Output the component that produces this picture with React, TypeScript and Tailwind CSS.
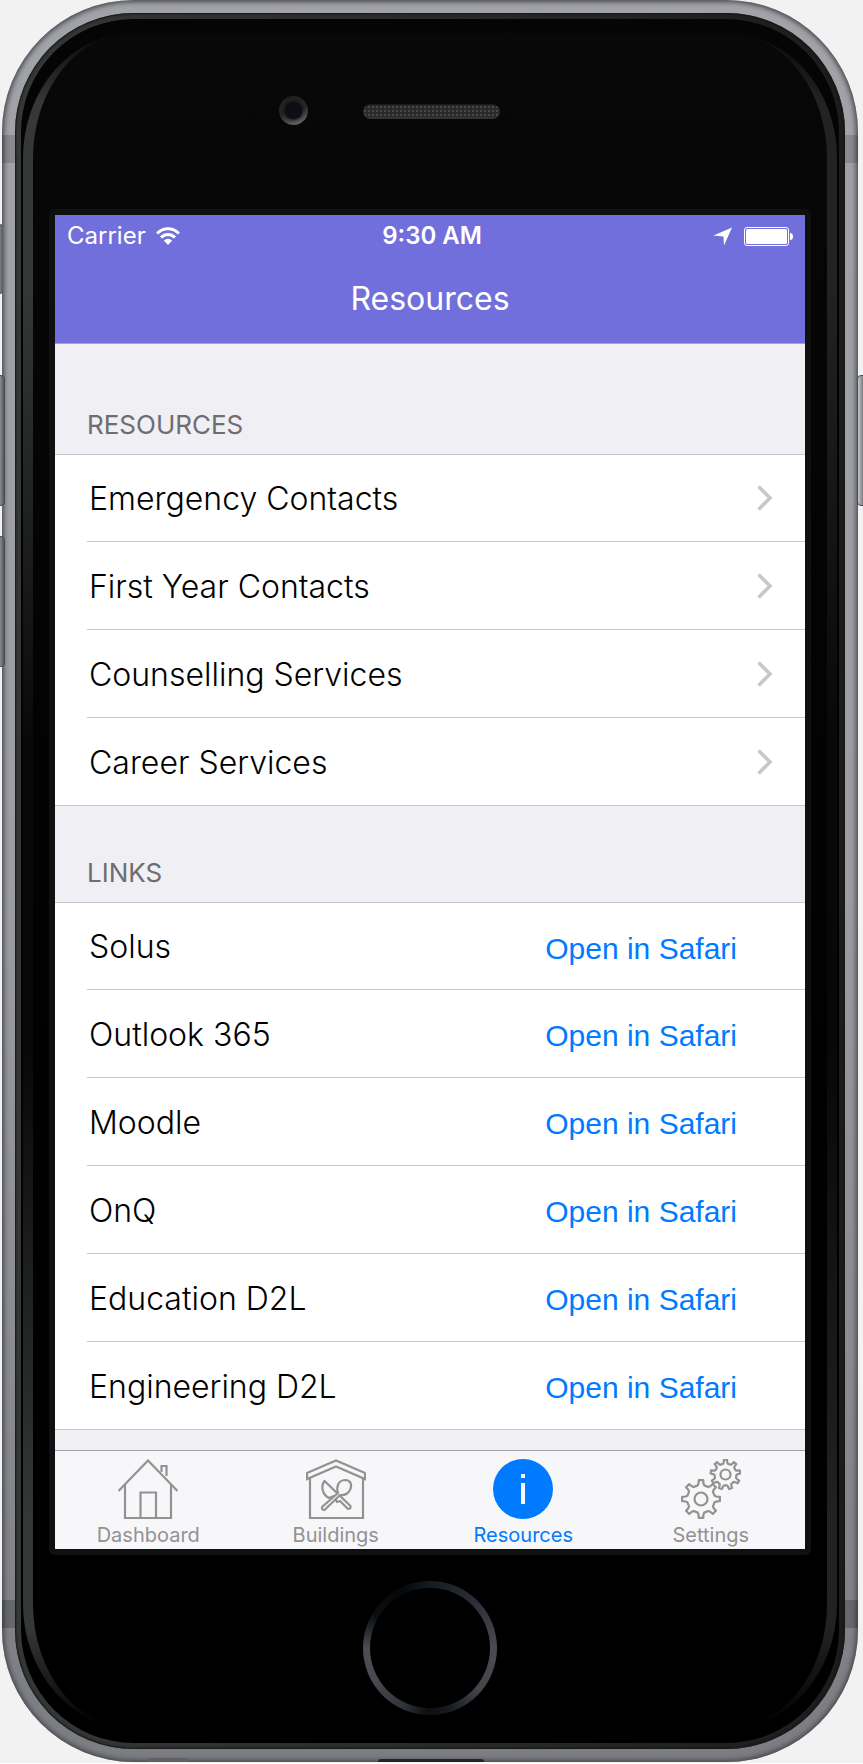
import React from "react";

const contacts = ["Emergency Contacts", "First Year Contacts", "Counselling Services", "Career Services"];
const links = ["Solus", "Outlook 365", "Moodle", "OnQ", "Education D2L", "Engineering D2L"];

function gearPath(cx: number, cy: number, outer: number, inner: number, teeth: number, offset: number) {
  const step = (Math.PI * 2) / teeth;
  const profile: [number, number][] = [
    [-0.3, inner],
    [-0.2, inner + (outer - inner) * 0.35],
    [-0.15, outer],
    [0.15, outer],
    [0.2, inner + (outer - inner) * 0.35],
    [0.3, inner],
  ];
  const points: string[] = [];
  for (let i = 0; i < teeth; i++) {
    for (const [t, r] of profile) {
      const a = offset + (i + t) * step;
      points.push(`${(cx + Math.cos(a) * r).toFixed(2)} ${(cy + Math.sin(a) * r).toFixed(2)}`);
    }
  }
  return `M${points.join("L")}Z`;
}

function DashboardIcon() {
  return (
    <svg width="60" height="60" viewBox="0 0 60 60" fill="none" stroke="#929292" strokeWidth="2.2" aria-hidden="true">
      <path d="M0.500 32 30 1.500 59.500 32" />
      <path d="M7 25V59H53V25" />
      <path d="M22.500 59V33.500H38V59" />
      <path d="M43.500 13V7H48.500V17" />
    </svg>
  );
}

function BuildingsIcon() {
  return (
    <svg width="60" height="60" viewBox="0 0 60 60" fill="none" stroke="#929292" strokeWidth="2.2" aria-hidden="true">
      <path d="M1 14 30 1.500 59 14V20L30 7.500 1 20Z" />
      <path d="M4 19V59H57V19" />
      <path strokeLinejoin="round" d="M18.500 22C14 28 17 36 23 39L28 37 31 43 34 42 42 50Q45 50 44.500 47Z" />
      <path fill="#f7f7f9" strokeLinejoin="round" d="M32 34 16 48Q15.500 51 18.500 51L34 36C45 38 50 21 39 21C32 21.500 30 28 32 34Z" />
    </svg>
  );
}

function ResourcesIcon() {
  return (
    <svg width="60" height="60" viewBox="0 0 60 60" aria-hidden="true">
      <circle cx="30" cy="30" r="30" fill="#007aff" />
      <path d="M28 15h4v4h-4zM28 24h4v21h-4z" fill="#f7f7f9" />
    </svg>
  );
}

function SettingsIcon() {
  return (
    <svg width="60" height="60" viewBox="0 0 60 60" fill="none" stroke="#929292" strokeWidth="2.2" strokeLinejoin="round" aria-hidden="true">
      <path d={gearPath(44.5, 15.5, 15, 11, 9, Math.PI / 2 + Math.PI / 9)} />
      <circle cx="44.500" cy="15.500" r="5" />
      <path d={gearPath(20, 40, 19, 14, 8, 0)} fill="#f7f7f9" />
      <circle cx="20" cy="40" r="6.500" />
    </svg>
  );
}

const tabs = [
  { label: "Dashboard", icon: <DashboardIcon />, active: false },
  { label: "Buildings", icon: <BuildingsIcon />, active: false },
  { label: "Resources", icon: <ResourcesIcon />, active: true },
  { label: "Settings", icon: <SettingsIcon />, active: false },
];

function StatusBar() {
  return (
    <div className="grid h-[42px] grid-cols-3 items-center px-3">
      <div className="flex items-center gap-[10px]">
        <span className="font-[Inter,sans-serif] text-[24px]">Carrier</span>
        <svg width="24" height="18" viewBox="0 0 24 18" fill="none" stroke="#fff" strokeWidth="3" aria-hidden="true">
          <path d="M1 6.500C7.500 0 16.500 0 23 6.500" />
          <path d="M5 10.500C9 6.500 15 6.500 19 10.500" />
          <path d="M7.800 13.500Q12 10 16.200 13.500L12 18Z" fill="#fff" stroke="none" />
        </svg>
      </div>
      <span className="pl-1 text-center font-[Inter,sans-serif] text-[24px] font-semibold">9:30 AM</span>
      <div className="flex items-center justify-end gap-3">
        <svg width="19" height="19" viewBox="0 0 19 19" fill="#fff" aria-hidden="true">
          <path d="M19 0.500 11 18.500 10.500 9.500 0.500 8.500Z" />
        </svg>
        <svg width="49" height="19" viewBox="0 0 49 19" fill="none" aria-hidden="true">
          <rect x="0.500" y="0.500" width="44" height="18" rx="2.500" stroke="#fff" />
          <rect x="2" y="2" width="41" height="15" rx="1.500" fill="#fff" />
          <path d="M46 6Q49 6 49 9.500T46 13Z" fill="#fff" />
        </svg>
      </div>
    </div>
  );
}

function Section({ title, tall, children }: { title: string; tall?: boolean; children: React.ReactNode }) {
  return (
    <section>
      <h2
        className={`flex items-end pb-[11px] pl-8 font-[Inter,sans-serif] text-[26px] leading-9 font-normal text-[#6d6d72] ${tall ? "h-[110px]" : "h-24"}`}
      >
        {title}
      </h2>
      <ul className="border-y border-[#c8c7cc] bg-white pl-8">{children}</ul>
    </section>
  );
}

const rowClass =
  "flex h-[88px] items-center justify-between border-b border-[#c8c7cc] pl-[2px] font-[Inter,sans-serif] text-[32px] font-light text-black first:h-[87px] last:h-[87px] last:border-b-0";

function Screen() {
  return (
    <div className="flex h-[1334px] flex-col bg-[#efeff4]">
      <header className="h-[129px] border-b border-[#a4a3c4] bg-[#716fdb] text-white">
        <StatusBar />
        <h1 className="mt-[22px] text-center font-[Inter,sans-serif] text-[32px] leading-10 font-normal">Resources</h1>
      </header>
      <main className="min-h-0 flex-1">
        <Section title="RESOURCES" tall>
          {contacts.map((name) => (
            <li key={name} className={rowClass}>
              <a href="#contact" className="flex flex-1 items-center justify-between pr-8">
                <span className="pt-[2px]">{name}</span>
                <svg width="16" height="26" viewBox="0 0 16 26" fill="none" stroke="#c7c7cc" strokeWidth="3.500" aria-hidden="true">
                  <path d="M1.500 1.500 13 13 1.500 24.500" />
                </svg>
              </a>
            </li>
          ))}
        </Section>
        <Section title="LINKS">
          {links.map((name) => (
            <li key={name} className={rowClass}>
              <span className="pt-[2px]">{name}</span>
              <button
                type="button"
                className="mr-[68px] pt-1 font-['Liberation_Sans',Arial,sans-serif] text-[30px] font-normal text-[#007aff]"
              >
                Open in Safari
              </button>
            </li>
          ))}
        </Section>
      </main>
      <nav className="grid h-[99px] grid-cols-4 border-t border-[#a2a2a6] bg-[#f7f7f9] pt-2">
        {tabs.map((tab) => (
          <a
            key={tab.label}
            href="#tab"
            className={`flex flex-col items-center pr-px font-[Inter,sans-serif] text-[20px] leading-8 ${tab.active ? "text-[#007aff]" : "text-[#929292]"}`}
          >
            {tab.icon}
            {tab.label}
          </a>
        ))}
      </nav>
    </div>
  );
}

function SideButton({ place }: { place: string }) {
  return (
    <div
      className={`absolute w-[10px] rounded-sm border border-[#4b4c50] bg-linear-to-r from-[#c9cacf] via-[#8b8c92] to-[#55565b] ${place}`}
    />
  );
}

function HomeButton() {
  return (
    <button
      type="button"
      aria-label="Home"
      className="size-[134px] rounded-full bg-[conic-gradient(#151b20,#2c3036_45deg,#4a4a50_90deg,#45454b_130deg,#14191d_165deg,#0b0f12_182deg,#30343a_205deg,#4a4a50_240deg,#4a4e53_270deg,#0a0e10_300deg,#05080a_335deg,#151b20)] p-[7px]"
    >
      <span className="block size-full rounded-full bg-black" />
    </button>
  );
}

export default function App() {
  return (
    <div className="relative overflow-hidden bg-[#f2f2f2] pr-[5px] pb-px pl-[2px]">
      <SideButton place="-left-[6px] top-[224px] h-[70px]" />
      <div className="relative overflow-hidden rounded-[132px] bg-linear-to-b from-[#a2a3a9] via-[#9c9da3] to-[#7c7d82] p-[13px] shadow-[inset_0_0_5px_2px_#47484c]">
        <div className="absolute inset-x-0 top-[135px] h-7 bg-black/15" />
        <div className="absolute inset-x-0 bottom-[134px] h-7 bg-black/20" />
        <div className="relative rounded-[119px] bg-linear-to-r from-[#363838] to-[#1c1c1c] p-[6px] shadow-[inset_0_0_2px_1px_#151515]">
          <div className="rounded-[113px] bg-linear-to-b from-[#050505] to-black px-[2px] py-[14px]">
            <div className="rounded-[110px/125px] bg-[linear-gradient(to_bottom,#080808_0,transparent_4%,transparent_15%,#080808_42%,#080808_60%,transparent_88%,transparent_94%,#000_100%),linear-gradient(to_right,#363838,#222)] px-[10px]">
              <div className="flex flex-col items-center rounded-[100px/125px] bg-linear-to-b from-[#080808] via-[#020202] to-black px-4 pt-[63px] pb-[14px]">
                <div className="flex h-[113px] w-full items-start">
                  <div className="mr-[55px] ml-[230px] flex size-[29px] items-center justify-center rounded-full bg-linear-160 from-[#1e1f1f] via-[#242525] to-[#777]">
                    <div className="size-[17px] rounded-full bg-[#0f0c18] shadow-[0_0_3px_1px_#111]" />
                  </div>
                  <div className="mt-2 h-[15px] w-[137px] rounded-full border-t border-b-2 border-[#1a1a1a] border-b-[#333] bg-[radial-gradient(#505050_20%,#2a2a2a_45%)] bg-[length:4px_4px]" />
                </div>
                <div className="w-full rounded-md bg-[#0f1110] p-[6px]">
                  <Screen />
                </div>
                <div className="mt-[26px]">
                  <HomeButton />
                </div>
              </div>
            </div>
          </div>
        </div>
        <div className="absolute bottom-0 left-[376px] h-[3px] w-[106px] rounded-t-full bg-[#242424]" />
        <div className="absolute bottom-0 left-[146px] h-[4px] w-[40px] rounded-t-full bg-[#606063]" />
      </div>
      <SideButton place="-left-[5px] top-[375px] h-[131px]" />
      <SideButton place="-left-[5px] top-[536px] h-[131px]" />
      <SideButton place="-right-[4px] top-[375px] h-[131px]" />
    </div>
  );
}
